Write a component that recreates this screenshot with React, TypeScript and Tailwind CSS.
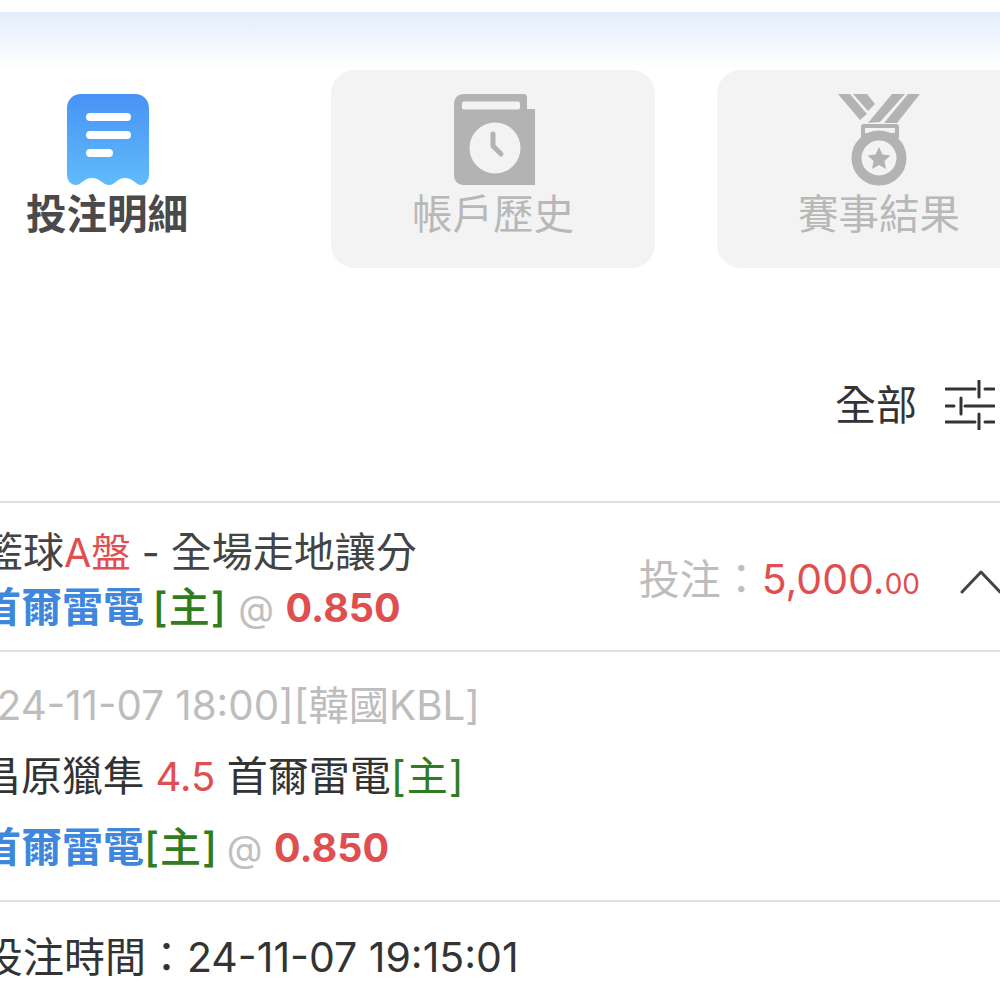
const fontStack = 'font-["Inter","Noto_Sans_CJK_TC",sans-serif]';

function ReceiptIcon() {
  return (
    <svg width="82" height="92" viewBox="0 0 82 92" className="ml-[2px] shrink-0">
      <defs>
        <linearGradient id="receipt" x1="0" y1="0" x2="0" y2="1">
          <stop offset="0" stopColor="#4893f6" />
          <stop offset="1" stopColor="#60bbfa" />
        </linearGradient>
      </defs>
      <path
        d="M14 0H68C76 0 82 6 82 14V80C82 87 78 91 74 91C69 91 66 84 58 84C50 84 48 91 42 91C36 91 33 84 25 84C17 84 14 91 9 91C4 91 0 87 0 80V14C0 6 6 0 14 0Z"
        fill="url(#receipt)"
      />
      <path d="M23 23H60M23 41H60M23 59H42" stroke="#fff" strokeWidth="8" strokeLinecap="round" />
    </svg>
  );
}

function BookIcon() {
  return (
    <svg width="82" height="92" viewBox="0 0 82 92" className="ml-[4px] shrink-0">
      <path d="M10 0H69C72 0 73 1 73 4V15H81V91H10C4 91 0 87 0 81V10C0 4 4 0 10 0Z" fill="#b3b3b3" />
      <rect x="8" y="7.500" width="58" height="8" rx="2" fill="#f3f3f3" />
      <circle cx="41" cy="54" r="25.500" fill="#f3f3f3" />
      <path d="M39 40V52L47 60" fill="none" stroke="#b3b3b3" strokeWidth="5" strokeLinecap="round" strokeLinejoin="round" />
    </svg>
  );
}

function MedalIcon() {
  return (
    <svg width="82" height="92" viewBox="0 0 82 92" className="shrink-0" fill="#b3b3b3">
      <path d="M0 0H12L29 20L22 26Z" />
      <path d="M15 0H29L37 10L30 17Z" />
      <path d="M54 0H67L42 28L30 29Z" />
      <path d="M70 0H82L59 29H46Z" />
      <path fillRule="evenodd" d="M26 30H58C60 30 61 31 61 33V44H23V33C23 31 24 30 26 30ZM27 34V39H57V34Z" />
      <ellipse cx="41" cy="64" rx="22.500" ry="22.500" fill="#f3f3f3" stroke="#b3b3b3" strokeWidth="10" />
      <path d="M41 53L44.500 60.500L52.500 61.500L46.500 67L48 75L41 71L34 75L35.500 67L29.500 61.500L37.500 60.500Z" />
    </svg>
  );
}

function FilterIcon() {
  return (
    <svg width="50" height="50" viewBox="0 0 50 50" className="shrink-0" stroke="#333" strokeWidth="3" strokeLinecap="round">
      <path d="M1 9H30M40 9H49M34 1V17" />
      <path d="M1 26H9M20 26H49M16 18V34" />
      <path d="M1 42H30M40 42H49M34 34V49" />
    </svg>
  );
}

function ChevronUp() {
  return (
    <svg width="44" height="24" viewBox="0 0 44 24" className="shrink-0" fill="none" stroke="#444" strokeWidth="3" strokeLinecap="round" strokeLinejoin="round">
      <path d="M2 22L21 2L40 22" />
    </svg>
  );
}

function Tab({ icon, label, active }: { icon: React.ReactNode; label: string; active?: boolean }) {
  return (
    <div
      className={`flex h-[198px] w-[324px] shrink-0 flex-col items-center rounded-[24px] pt-6 ${
        active ? 'bg-white' : 'bg-[#f3f3f3]'
      }`}
    >
      {icon}
      <span className={`text-[40.500px] leading-[58px] ${active ? 'font-bold text-[#4a4a4a]' : 'text-[#b8b8b8]'}`}>{label}</span>
    </div>
  );
}

// same pick line is used in the summary and in the detail
function Pick({ spaced }: { spaced?: boolean }) {
  return (
    <div className="-ml-[2px] whitespace-nowrap">
      <span className="font-semibold text-[#3f87dd]">首爾雷電</span>
      {spaced ? ' ' : ''}
      <span className={`inline-block font-medium tracking-[1px] text-[#2f7d20] ${spaced ? '-ml-[3px]' : ''}`}>[主]</span>{' '}
      <span className={`inline-block text-[37px] text-[#c0c0c0] ${spaced ? '' : '-ml-[3px]'}`}>@</span>{' '}
      <span className="text-[39.500px] font-bold text-[#e04f4f]">0.850</span>
    </div>
  );
}

export default function App() {
  return (
    <div className={`h-[1000px] w-[1000px] overflow-hidden bg-white ${fontStack}`}>
      <div className="mt-3 h-[58px] bg-gradient-to-b from-[#e2eefc] to-white" />

      {/* Tabs */}
      <div className="-ml-[55px] flex gap-[62px]">
        <Tab icon={<ReceiptIcon />} label="投注明細" active />
        <Tab icon={<BookIcon />} label="帳戶歷史" />
        <Tab icon={<MedalIcon />} label="賽事結果" />
      </div>

      {/* Filter */}
      <div className="flex h-[233px] items-end justify-end gap-[28px] pb-[67px] pr-[5px]">
        <span className="text-[41px] leading-[58px] text-[#333]">全部</span>
        <div className="pb-1">
          <FilterIcon />
        </div>
      </div>

      {/* Bet summary */}
      <div className="-ml-[18px] flex h-[151px] items-center justify-between border-y-2 border-[#e0e0e0] pt-[10px]">
        <div className="text-[41px] leading-[58px]">
          <div className="h-[52px] whitespace-nowrap leading-[52px] text-[#444]">
            籃球<span className="text-[39.500px] text-[#e04f4f]">A盤</span>
            <span className="text-[39px]"> - </span>全場走地讓分
          </div>
          <Pick spaced />
        </div>
        <div className="-mr-[4px] flex items-center gap-[40px]">
          <div className="whitespace-nowrap text-[41px] leading-[58px]">
            <span className="text-[#bdbdbd]">投注：</span>
            <span className="text-[#e04f4f]">
              5,000.<span className="text-[28px]">00</span>
            </span>
          </div>
          <ChevronUp />
        </div>
      </div>

      {/* Bet detail */}
      <div className="-ml-[18px] flex h-[250px] flex-col border-b-2 border-[#e0e0e0] pt-[19px] text-[41px] leading-[70px]">
        <div className="whitespace-nowrap text-[40.300px] text-[#bdbdbd]">[24-11-07 18:00][韓國KBL]</div>
        <div className="-ml-[2px] whitespace-nowrap text-[#333]">
          昌原獵隼 <span className="text-[40px] text-[#e04f4f]">4.5</span> 首爾雷電
          <span className="inline-block tracking-[1px] text-[#2f7d20]">[主]</span>
        </div>
        <Pick />
      </div>

      <div className="-ml-[18px] whitespace-nowrap pt-5 text-[41px] leading-[70px] text-[#333]">投注時間：24-11-07 19:15:01</div>
    </div>
  );
}
